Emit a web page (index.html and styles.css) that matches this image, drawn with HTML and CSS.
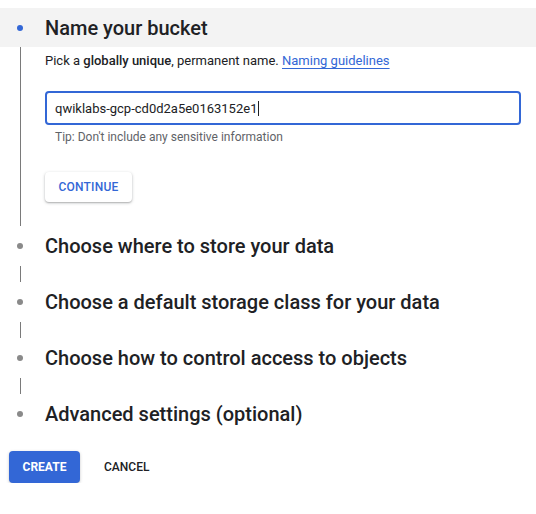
FILE: index.html
```html
<!DOCTYPE html>
<html>
<head>
<meta charset="utf-8">
<link rel="stylesheet" href="styles.css">
</head>
<body>
<div class="page">
  <div class="step-head active">
    <div class="rail"><span class="dot blue"></span></div>
    <h2 class="title">Name your bucket</h2>
  </div>
  <div class="step-body">
    <div class="rail"><span class="vline"></span></div>
    <div class="content">
      <p class="desc">Pick a <b>globally unique</b>, permanent name. <a class="link">Naming guidelines</a></p>
      <div class="field"><span class="value">qwiklabs-gcp-cd0d2a5e0163152e1</span><span class="caret"></span></div>
      <p class="tip">Tip: Don't include any sensitive information</p>
      <button class="btn-continue">CONTINUE</button>
    </div>
  </div>
  <div class="step-head">
    <div class="rail"><span class="dot"></span></div>
    <h2 class="title">Choose where to store your data</h2>
  </div>
  <div class="gap"><span class="vline"></span></div>
  <div class="step-head">
    <div class="rail"><span class="dot"></span></div>
    <h2 class="title">Choose a default storage class for your data</h2>
  </div>
  <div class="gap"><span class="vline"></span></div>
  <div class="step-head">
    <div class="rail"><span class="dot"></span></div>
    <h2 class="title">Choose how to control access to objects</h2>
  </div>
  <div class="gap"><span class="vline"></span></div>
  <div class="step-head">
    <div class="rail"><span class="dot"></span></div>
    <h2 class="title">Advanced settings (optional)</h2>
  </div>
  <div class="actions">
    <button class="btn-create">CREATE</button>
    <button class="btn-cancel">CANCEL</button>
  </div>
</div>
</body>
</html>
```
FILE: styles.css
```css
html, body {
  margin: 0;
  padding: 0;
  background: #fff;
}
body {
  font-family: Roboto, "Liberation Sans", sans-serif;
  color: #202124;
}
.page {
  padding-top: 8px;
}
.step-head {
  display: flex;
  align-items: center;
  height: 40px;
}
.step-head.active {
  height: 39px;
  background: #f3f3f3;
}
.rail {
  width: 45px;
  flex: none;
  align-self: stretch;
  display: flex;
  align-items: center;
}
.dot {
  display: block;
  width: 6px;
  height: 6px;
  border-radius: 50%;
  background: #8a8a8a;
  margin-left: 17px;
}
.dot.blue {
  background: #3367d6;
}
.title {
  margin: 0;
  font-size: 20px;
  font-weight: 500;
  color: #202124;
  letter-spacing: 0;
}
.step-body {
  display: flex;
  height: 179px;
}
.step-body .rail {
  align-items: stretch;
}
.vline {
  display: block;
  width: 1px;
  background: #7a7a7a;
  margin-left: 20px;
}
.content {
  flex: 1;
  padding-right: 15px;
}
.desc {
  margin: 4px 0 0;
  font-size: 13px;
  line-height: 20px;
}
.desc b {
  font-weight: 500;
}
.link {
  color: #3367d6;
  text-decoration: underline;
  text-underline-offset: 3px;
}
.field {
  margin-top: 20px;
  height: 34px;
  box-sizing: border-box;
  border: 2px solid #3367d6;
  border-radius: 4px;
  display: flex;
  align-items: center;
  padding-left: 8px;
  font-size: 13px;
}
.caret {
  display: inline-block;
  width: 1px;
  height: 15px;
  background: #202124;
  margin-left: 1px;
}
.tip {
  margin: 4px 0 0 10px;
  font-size: 12px;
  line-height: 16px;
  color: #5f6368;
}
.btn-continue {
  margin-top: 27px;
  height: 30px;
  width: 87px;
  border: none;
  border-radius: 4px;
  background: #fff;
  box-shadow: 0 1px 3px rgba(60,64,67,0.35), 0 1px 1px rgba(60,64,67,0.15);
  font-family: Roboto, "Liberation Sans", sans-serif;
  font-size: 12px;
  font-weight: 500;
  color: #3367d6;
  letter-spacing: 0.2px;
  padding: 0;
}
.gap {
  height: 16px;
  display: flex;
}
.actions {
  display: flex;
  align-items: center;
  margin-top: 17px;
  padding-left: 9px;
  gap: 10px;
}
.btn-create {
  height: 32px;
  width: 71px;
  border: none;
  border-radius: 4px;
  background: #3367d6;
  color: #fff;
  font-family: Roboto, "Liberation Sans", sans-serif;
  font-size: 12px;
  font-weight: 700;
  padding: 0;
  box-shadow: 0 1px 3px rgba(60,64,67,0.3);
}
.btn-cancel {
  height: 32px;
  border: none;
  background: transparent;
  color: #202124;
  font-family: Roboto, "Liberation Sans", sans-serif;
  font-size: 12px;
  font-weight: 500;
  padding: 0 14px;
}
```
